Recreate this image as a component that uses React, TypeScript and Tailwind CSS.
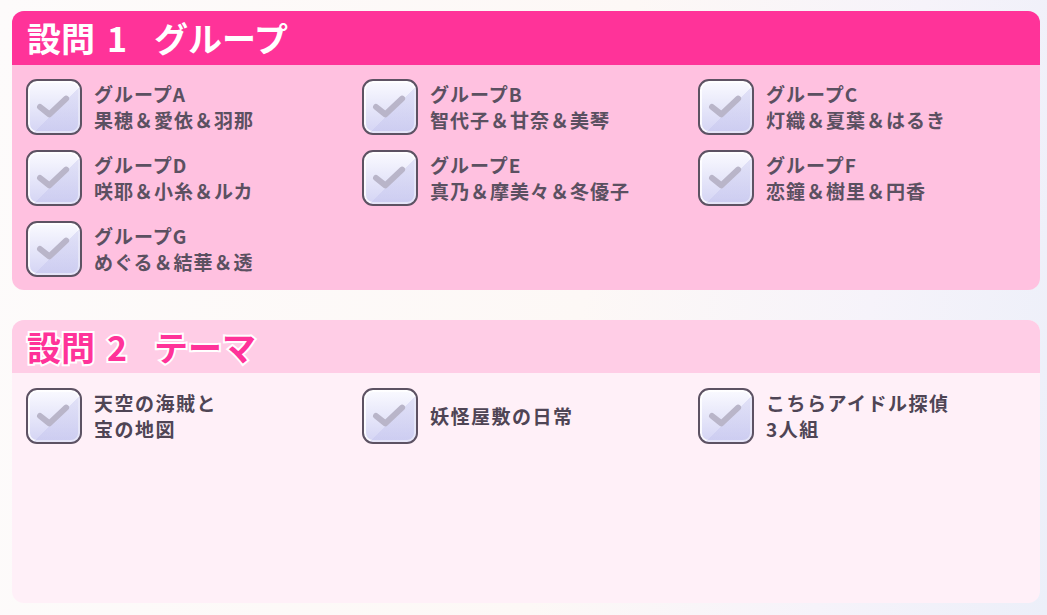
import React from 'react';

const font = "font-['Noto_Sans_CJK_JP','Noto_Sans',sans-serif]";

const groups = [
    ['グループA', '果穂＆愛依＆羽那'],
    ['グループB', '智代子＆甘奈＆美琴'],
    ['グループC', '灯織＆夏葉＆はるき'],
    ['グループD', '咲耶＆小糸＆ルカ'],
    ['グループE', '真乃＆摩美々＆冬優子'],
    ['グループF', '恋鐘＆樹里＆円香'],
    ['グループG', 'めぐる＆結華＆透'],
];

const themes = [
    ['天空の海賊と', '宝の地図'],
    ['妖怪屋敷の日常'],
    ['こちらアイドル探偵', '3人組'],
];

function CheckBox() {
    return (
        <div className="relative w-[56px] h-[56px] shrink-0 rounded-[11px] border-2 border-[#5d5263] bg-gradient-to-b from-[#fafaff] to-[#d4d4f4] shadow-[inset_0_0_0_2px_rgba(255,255,255,0.85)] overflow-hidden">
            <div className="absolute inset-0 bg-[linear-gradient(135deg,transparent_55%,rgba(190,190,235,0.35)_55%)]" />
            <svg viewBox="0 0 56 56" className="absolute inset-0 w-full h-full">
                <path d="M13 28 L23 36 L41 19" fill="none" stroke="#b9b5c9" strokeWidth="6.5" strokeLinecap="round" strokeLinejoin="round" />
            </svg>
        </div>
    );
}

function Item({ lines, big }: { lines: string[]; big?: boolean }) {
    return (
        <div className="flex items-center gap-[12px] h-[56px]">
            <CheckBox />
            <div className={`flex flex-col font-semibold ${big ? 'text-[19px] leading-[26px] text-[#4f4555] tracking-[1.5px]' : 'text-[19px] leading-[26px] text-[#5b5061] tracking-[1px]'}`}>
                {lines.map((l) => (
                    <span key={l} className="block h-[26px] whitespace-nowrap">{l}</span>
                ))}
            </div>
        </div>
    );
}

function Title({ num, text, light }: { num: string; text: string; light?: boolean }) {
    const cls = light
        ? 'text-[#ff3399] [-webkit-text-stroke:4px_white] [paint-order:stroke_fill]'
        : 'text-white';
    return (
        <h2 className={`flex items-baseline font-bold text-[34px] leading-none whitespace-nowrap ${cls}`}>
            <span>設問</span>
            <span className="ml-[12px]">{num}</span>
            <span className="ml-[27px]">{text}</span>
        </h2>
    );
}

export default function App() {
    return (
        <div className={`${font} w-[1047px] h-[615px] overflow-hidden bg-[linear-gradient(100deg,#fdfbfb_0%,#fdf8f6_55%,#f6f3fa_80%,#eceff9_100%)] pt-[11px] pl-[12px]`}>
            <div className="w-[1028px] flex flex-col gap-[30px]">
                <section className="rounded-[12px] overflow-hidden bg-[#ffc1e0]">
                    <div className="h-[54px] bg-[#ff3399] flex items-center pl-[15px]">
                        <Title num="1" text="グループ" />
                    </div>
                    <div className="grid grid-cols-[336px_336px_336px] gap-y-[15px] pl-[14px] pt-[14px] pb-[13px]">
                        {groups.map((g) => (
                            <Item key={g[0]} lines={g} />
                        ))}
                    </div>
                </section>
                <section className="rounded-[12px] overflow-hidden bg-[#fff0f8] h-[283px]">
                    <div className="h-[53px] bg-[#ffcde6] flex items-center pl-[15px]">
                        <Title num="2" text="テーマ" light />
                    </div>
                    <div className="grid grid-cols-[336px_336px_336px] pl-[14px] pt-[15px]">
                        {themes.map((t) => (
                            <Item key={t[0]} lines={t} big />
                        ))}
                    </div>
                </section>
            </div>
        </div>
    );
}
